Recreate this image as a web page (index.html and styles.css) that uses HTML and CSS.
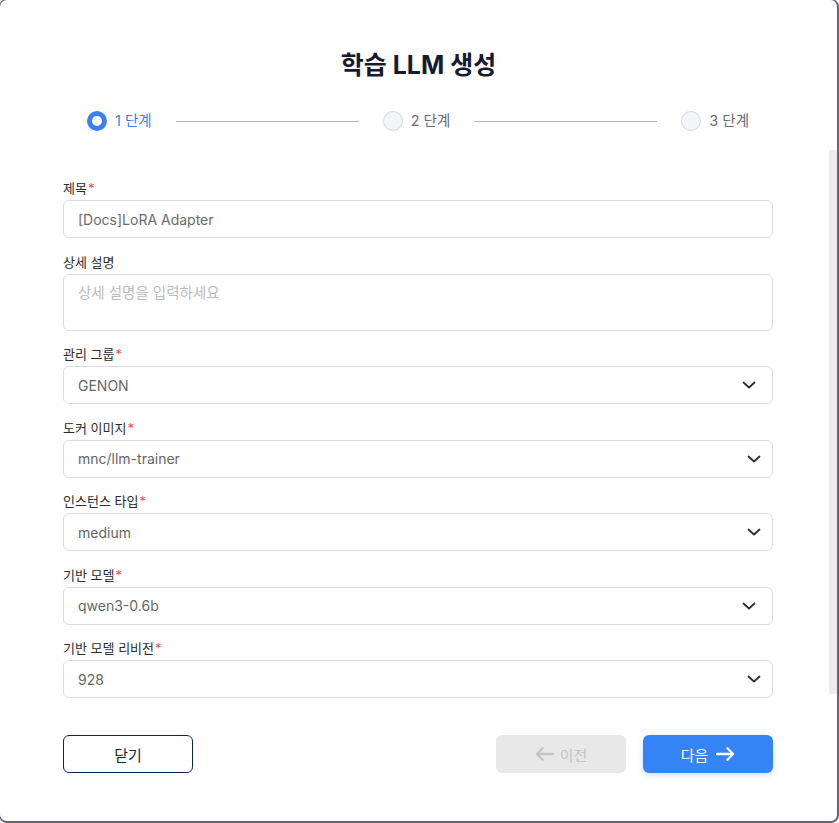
FILE: index.html
```html
<!DOCTYPE html>
<html lang="ko">
<head>
<meta charset="utf-8">
<title>학습 LLM 생성</title>
<link rel="stylesheet" href="styles.css">
</head>
<body>
<div class="modal">
  <header class="header">
    <h1 class="title">학습 LLM 생성</h1>
    <div class="stepper">
      <div class="step step-active"><span class="dot"></span><span class="step-label">1 단계</span></div>
      <div class="step-line"></div>
      <div class="step"><span class="dot"></span><span class="step-label">2 단계</span></div>
      <div class="step-line"></div>
      <div class="step"><span class="dot"></span><span class="step-label">3 단계</span></div>
    </div>
  </header>
  <section class="body">
    <form class="form">
      <div class="field">
        <label class="label">제목<span class="req">*</span></label>
        <div class="input">[Docs]LoRA Adapter</div>
      </div>
      <div class="field">
        <label class="label">상세 설명</label>
        <div class="input textarea placeholder">상세 설명을 입력하세요</div>
      </div>
      <div class="field">
        <label class="label">관리 그룹<span class="req">*</span></label>
        <div class="input select select-wide"><span>GENON</span><svg class="chev" viewBox="0 0 14 8" width="14" height="8"><path d="M1.5 1.5 7 6.5 12.5 1.5"/></svg></div>
      </div>
      <div class="field">
        <label class="label">도커 이미지<span class="req">*</span></label>
        <div class="input select"><span>mnc/llm-trainer</span><svg class="chev" viewBox="0 0 14 8" width="14" height="8"><path d="M1.5 1.5 7 6.5 12.5 1.5"/></svg></div>
      </div>
      <div class="field">
        <label class="label">인스턴스 타입<span class="req">*</span></label>
        <div class="input select"><span>medium</span><svg class="chev" viewBox="0 0 14 8" width="14" height="8"><path d="M1.5 1.5 7 6.5 12.5 1.5"/></svg></div>
      </div>
      <div class="field">
        <label class="label">기반 모델<span class="req">*</span></label>
        <div class="input select select-wide"><span>qwen3-0.6b</span><svg class="chev" viewBox="0 0 14 8" width="14" height="8"><path d="M1.5 1.5 7 6.5 12.5 1.5"/></svg></div>
      </div>
      <div class="field">
        <label class="label">기반 모델 리비전<span class="req">*</span></label>
        <div class="input select"><span>928</span><svg class="chev" viewBox="0 0 14 8" width="14" height="8"><path d="M1.5 1.5 7 6.5 12.5 1.5"/></svg></div>
      </div>
    </form>
    <div class="track"></div>
  </section>
  <footer class="footer">
    <button class="btn btn-close" type="button">닫기</button>
    <div class="footer-right">
      <button class="btn btn-prev" type="button"><svg class="arrow" viewBox="0 0 20 14" width="19" height="14"><path d="M19 7H2M8 1 2 7l6 6"/></svg>이전</button>
      <button class="btn btn-next" type="button">다음<svg class="arrow" viewBox="0 0 20 14" width="19" height="14"><path d="M1 7h17M12 1l6 6-6 6"/></svg></button>
    </div>
  </footer>
</div>
</body>
</html>
```

FILE: styles.css
```css
* { box-sizing: border-box; }
html, body { margin: 0; padding: 0; background: #ffffff; overflow: hidden; }
body {
  font-family: "Inter", "Noto Sans CJK KR", "Noto Sans", sans-serif;
  color: #222;
}
.modal {
  margin: -1px 0 0 -1px;
  width: 840px;
  height: 824px;
  border: 1px solid #67646f;
  border-right-width: 2px;
  border-bottom-width: 2px;
  border-radius: 8px;
  background: #fff;
  display: flex;
  flex-direction: column;
}
.header { padding-top: 49px; }
.title {
  margin: 0 0 30px;
  text-align: center;
  font-size: 25px;
  line-height: 32px;
  font-weight: 700;
  color: #161a2e;
}
.stepper {
  display: flex;
  align-items: center;
  height: 20px;
  margin: 0 88px 0 87px;
}
.step { display: flex; align-items: center; gap: 8px; }
.dot {
  width: 20px; height: 20px;
  border-radius: 50%;
  background: #f4f5f7;
  border: 1px solid #d3d6db;
}
.step-active .dot {
  background: #fff;
  border: 5.5px solid #3a80f3;
}
.step-label { font-size: 14.5px; line-height: 20px; color: #666a70; }
.step-active .step-label { color: #3a80f3; }
.step-line {
  flex: 1;
  height: 1px;
  background: #b3b3b3;
  margin: 0 24px;
}
.body {
  margin-top: 19px;
  display: flex;
}
.form {
  width: 710px;
  margin-left: 63px;
  padding-top: 29px;
  display: flex;
  flex-direction: column;
  gap: 14.5px;
}
.field { display: flex; flex-direction: column; gap: 3px; }
.label { font-size: 13px; line-height: 18px; color: #2b2b2b; }
.req { color: #ef4d5a; margin-left: 1px; }
.input {
  height: 38px;
  border: 1px solid #dcdcdc;
  border-radius: 6px;
  padding: 0 14px;
  display: flex;
  align-items: center;
  font-size: 14px;
  color: #6b6b6b;
}
.textarea {
  height: 57px;
  align-items: flex-start;
  padding-top: 6px;
  font-size: 14.5px;
}
.placeholder { color: #bcbcbc; }
.select { justify-content: space-between; padding-right: 11px; color: #666; }
.select-wide { padding-right: 16px; }
.chev { fill: none; stroke: #2e2e2e; stroke-width: 1.8; stroke-linecap: round; stroke-linejoin: round; }
.track {
  width: 8px;
  margin-left: auto;
  margin-right: 0;
  margin-bottom: 4px;
  background: #ededed;
}
.footer {
  margin: 37px 0 0 63px;
  width: 710px;
  display: flex;
  justify-content: space-between;
}
.footer-right { display: flex; gap: 17px; }
.btn {
  width: 130px;
  height: 38px;
  border-radius: 6px;
  font-family: inherit;
  font-size: 15px;
  display: flex;
  align-items: center;
  justify-content: center;
  gap: 6px;
  border: none;
  padding: 0;
}
.btn-close {
  background: #fff;
  border: 1px solid #0b2750;
  color: #0b2750;
}
.btn-prev { background: #e8e8e8; color: #c4c4c4; }
.btn-next {
  background: #3584f5;
  color: #fff;
  box-shadow: 0 2px 6px rgba(53, 132, 245, 0.25);
  gap: 8px;
}
.arrow { fill: none; stroke: currentColor; stroke-width: 2.4; stroke-linecap: round; stroke-linejoin: round; }
```
